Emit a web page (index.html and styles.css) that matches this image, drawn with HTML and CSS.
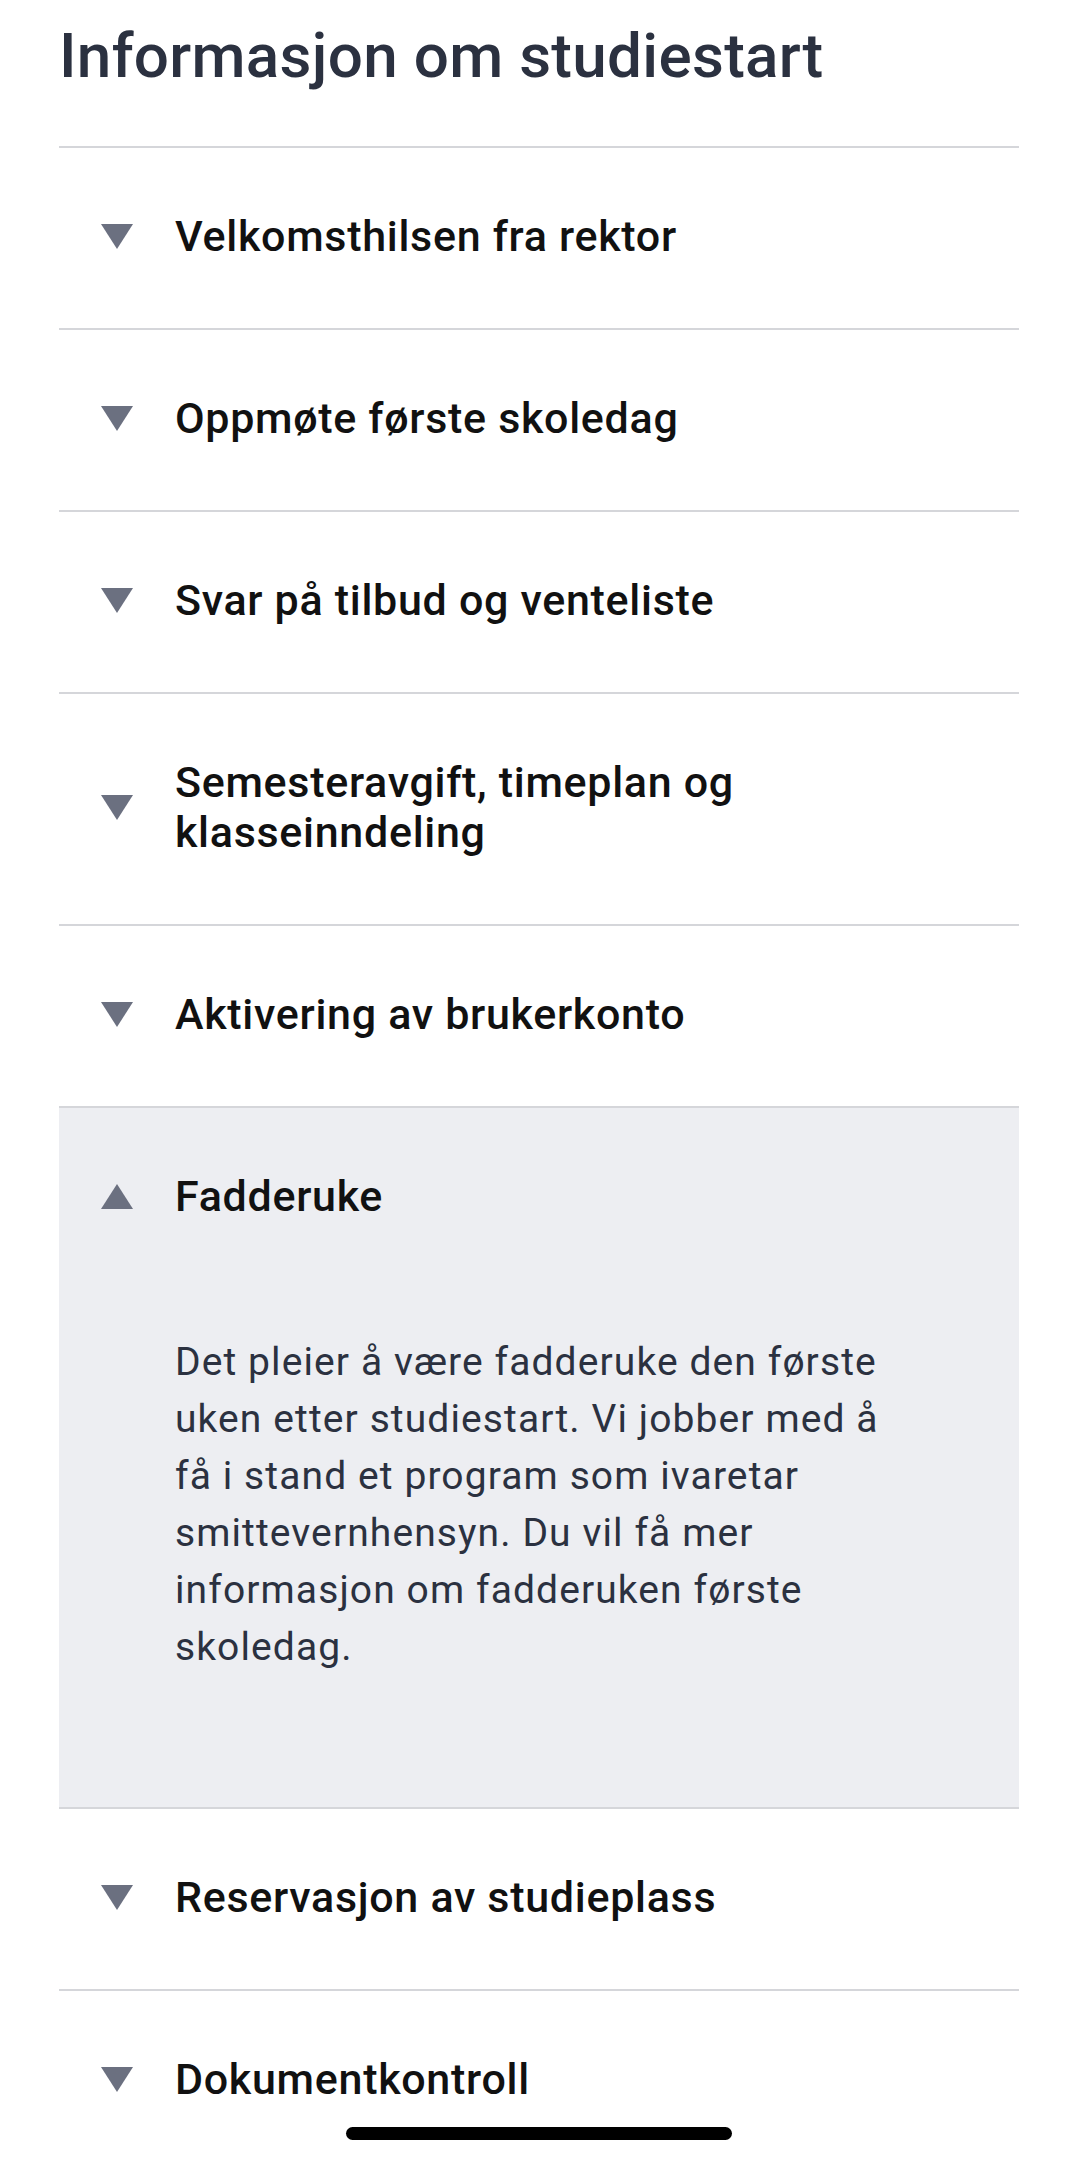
FILE: index.html
```html
<!DOCTYPE html>
<html lang="no">
<head>
    <meta charset="UTF-8">
    <meta name="viewport" content="width=device-width, initial-scale=1.0">
    <title>Informasjon om studiestart</title>
    <link rel="stylesheet" href="styles.css">
</head>
<body>
    <div class="screen">
        <h1>Informasjon om studiestart</h1>

        <div class="accordion">
            <div class="item">
                <div class="item-head">
                    <span class="arrow"></span>
                    <span class="item-title">Velkomsthilsen fra rektor</span>
                </div>
            </div>
            <div class="item">
                <div class="item-head">
                    <span class="arrow"></span>
                    <span class="item-title">Oppmøte første skoledag</span>
                </div>
            </div>
            <div class="item">
                <div class="item-head">
                    <span class="arrow"></span>
                    <span class="item-title">Svar på tilbud og venteliste</span>
                </div>
            </div>
            <div class="item">
                <div class="item-head">
                    <span class="arrow"></span>
                    <span class="item-title">Semesteravgift, timeplan og klasseinndeling</span>
                </div>
            </div>
            <div class="item">
                <div class="item-head">
                    <span class="arrow"></span>
                    <span class="item-title">Aktivering av brukerkonto</span>
                </div>
            </div>
            <div class="item open">
                <div class="item-head">
                    <span class="arrow"></span>
                    <span class="item-title">Fadderuke</span>
                </div>
                <div class="item-body">
                    Det pleier å være fadderuke den første uken etter studiestart. Vi jobber med å få i stand et program som ivaretar smittevernhensyn. Du vil få mer informasjon om fadderuken første skoledag.
                </div>
            </div>
            <div class="item">
                <div class="item-head">
                    <span class="arrow"></span>
                    <span class="item-title">Reservasjon av studieplass</span>
                </div>
            </div>
            <div class="item">
                <div class="item-head">
                    <span class="arrow"></span>
                    <span class="item-title">Dokumentkontroll</span>
                </div>
            </div>
        </div>

        <div class="home-bar"></div>
    </div>
</body>
</html>
```

FILE: styles.css
```css
body {
    margin: 0;
    background: #fff;
    font-family: Roboto, "Noto Sans", Arial, sans-serif;
}

.screen {
    position: relative;
    height: 2160px;
    overflow: hidden;
    padding: 0 61px 0 59px;
}

h1 {
    margin: 20px 0 54px;
    font-size: 62px;
    line-height: 72px;
    font-weight: 500;
    color: #2b3140;
    letter-spacing: 0.3px;
}

.item {
    border-top: 2px solid #d5d6da;
}

.item.open {
    background-color: #edeef2;
}

.item-head {
    display: flex;
    align-items: center;
    gap: 42px;
    padding: 63px 60px 67px 42px;
}

.item-title {
    font-size: 43px;
    line-height: 50px;
    font-weight: 500;
    color: #111;
    letter-spacing: 0.7px;
}

/* треугольник вниз / вверх */
.arrow {
    flex: none;
    width: 0;
    height: 0;
    border-left: 16px solid transparent;
    border-right: 16px solid transparent;
    border-top: 25px solid #6b7080;
}

.item.open .arrow {
    border-top: none;
    border-bottom: 25px solid #6b7080;
}

.item-body {
    padding: 46px 119px 131px 116px;
    font-size: 39px;
    line-height: 57px;
    color: #2b3140;
    letter-spacing: 1.1px;
}

.home-bar {
    position: absolute;
    left: 346px;
    top: 2127px;
    width: 386px;
    height: 13px;
    border-radius: 7px;
    background: #000;
}
```
